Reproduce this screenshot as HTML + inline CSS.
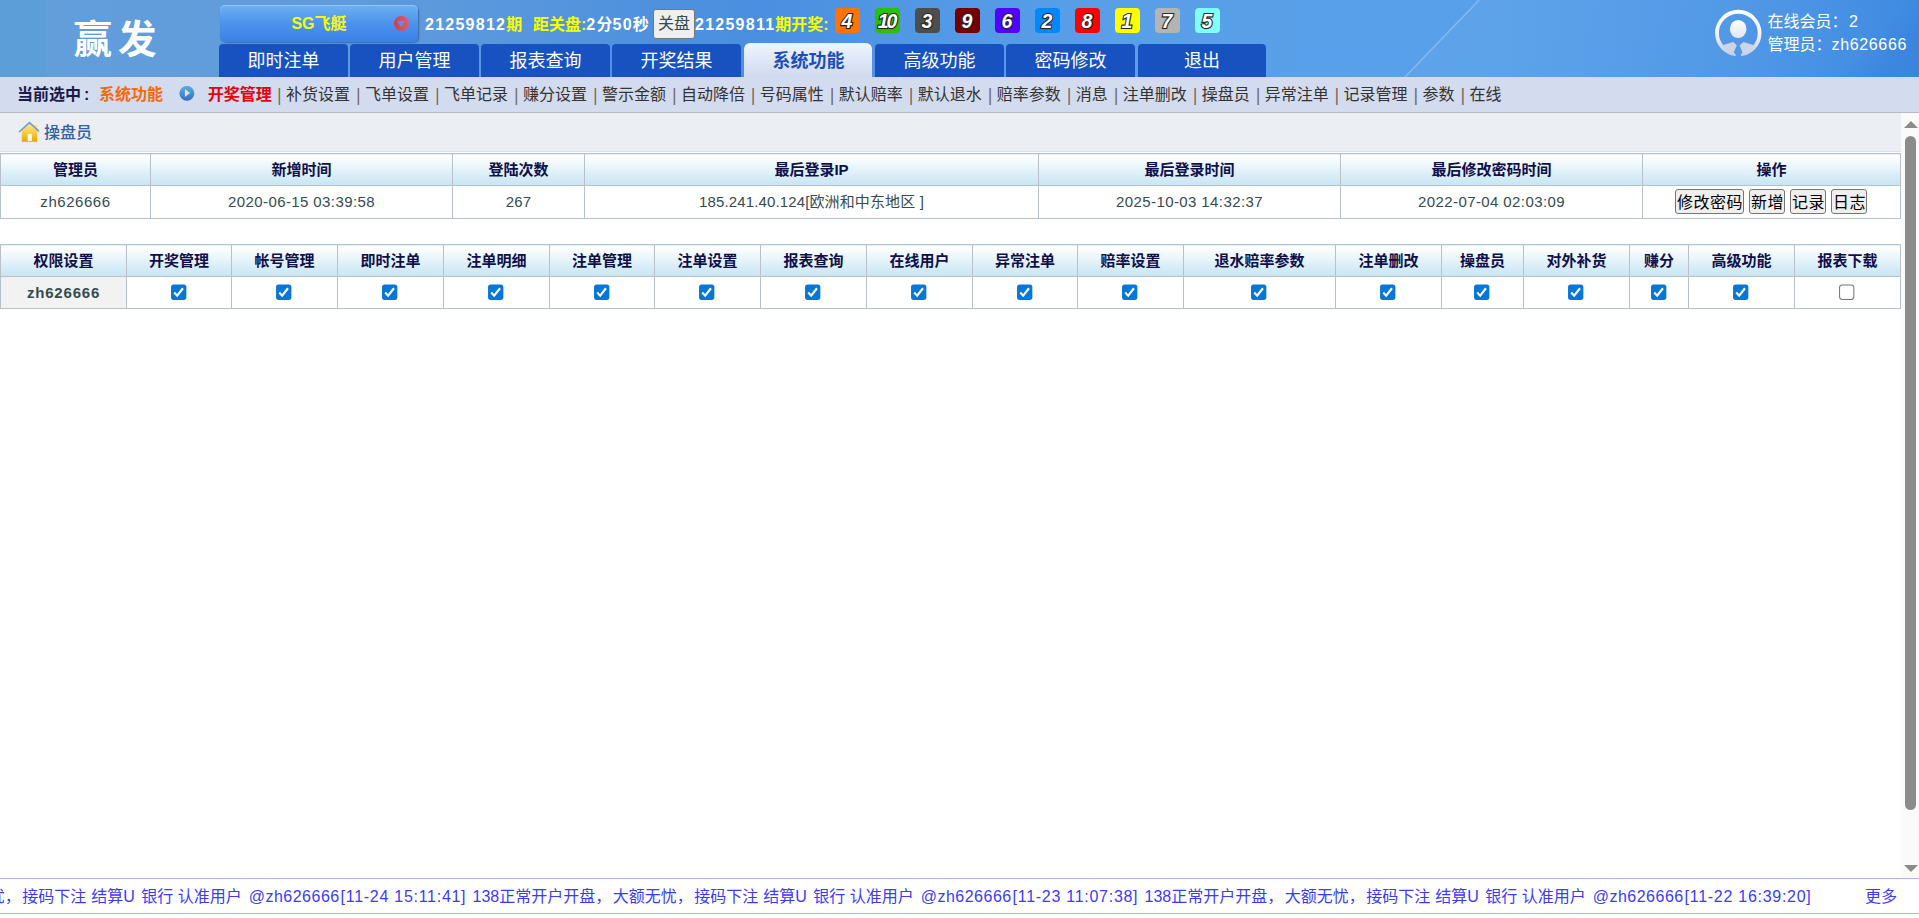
<!DOCTYPE html>
<html lang="zh-CN">
<head>
<meta charset="utf-8">
<title>赢发</title>
<style>
*{box-sizing:border-box;}
html,body{margin:0;padding:0;}
body{width:1919px;height:918px;overflow:hidden;position:relative;background:#fff;
  font-family:"Liberation Sans","Noto Sans CJK SC",sans-serif;font-size:15px;color:#344b50;}
.abs{position:absolute;white-space:nowrap;}
/* ---------- header ---------- */
#header{position:absolute;left:0;top:0;width:1919px;height:77px;overflow:hidden;
  background:
   linear-gradient(90deg,#5c9ed8 0,#5c9ed8 45px,#639edb 46px,#609cdc 300px,#5a98dd 480px,#4f91dd 650px,#4a8fe0 760px,#5197e4 900px,#589fe8 1100px,#58a0e9 1500px,#4e96e6 1750px,#3f8be2 1919px);}
#streak1{position:absolute;left:1404px;top:0;width:600px;height:77px;transform:skewX(-43.9deg);transform-origin:0 100%;
  background:linear-gradient(90deg,rgba(255,255,255,.30) 0,rgba(255,255,255,.22) 1.5px,rgba(255,255,255,.035) 3px,rgba(255,255,255,.02) 250px,rgba(255,255,255,0) 420px);}
#streak2{position:absolute;left:1832px;top:0;width:300px;height:77px;transform:skewX(-43.9deg);transform-origin:0 100%;
  background:linear-gradient(90deg,rgba(20,80,190,.0) 0,rgba(20,80,190,.10) 40px,rgba(20,80,190,.15) 200px);}
#logo{left:73.5px;top:11px;font-size:38.5px;font-weight:bold;color:#fff;letter-spacing:6px;line-height:58px;}
#game{left:220px;top:5px;width:198px;height:37px;border-radius:5px;
  background:linear-gradient(180deg,#6db1f3 0,#4d93ec 50%,#3a80e6 100%);box-shadow:1px 1px 1.5px rgba(30,60,130,.55),inset 0 1px 0 rgba(255,255,255,.28);}
#game .t{left:0;width:198px;text-align:center;top:0;line-height:38px;font-size:16px;font-weight:bold;color:#f6ff00;}
#game .c{left:174.3px;top:10.5px;width:15px;height:15.3px;border-radius:50%;background:linear-gradient(90deg,#c6424b 0,#d1525f 50%,#d75e6f 100%);}
#game .c:after{content:"";position:absolute;left:3.2px;top:5.8px;border:4.4px solid transparent;border-top:6px solid #4c96ee;border-bottom:0;}
.info{top:13px;line-height:24px;font-size:16px;font-weight:bold;color:#fff;}
.y{color:#f6ff00;}
.n{letter-spacing:1.25px;}
#closebtn{left:653px;top:9px;width:42px;height:30px;border:1px solid #767676;border-radius:3px;background:#efefef;color:#344b50;
  font-size:16px;line-height:28.5px;text-align:center;}
.ball{top:8px;width:25px;height:25px;border-radius:4px;color:#fff;font:italic bold 19.5px/26px "Liberation Sans",sans-serif;text-align:center;text-indent:-1px;
  -webkit-text-stroke:2.2px #2a2a2a;paint-order:stroke fill;text-shadow:.5px 1px 1px rgba(30,30,30,.55);}
.tab{top:44px;width:129px;height:33px;background:#1852c0;border-radius:4px 4px 0 0;color:#fff;font-size:18px;line-height:34.5px;text-align:center;}
.tab.on{top:43px;height:34px;width:128px;border-radius:6px 6px 0 0;background:linear-gradient(180deg,#f0f4fd 0,#e1e8f8 45%,#d0d9ef 100%);color:#1c4fb8;font-weight:bold;line-height:37.6px;text-indent:1px;}
#user{left:1767.5px;top:10.3px;font-size:16px;line-height:23px;color:#fff;}
/* ---------- subnav ---------- */
#subnav{position:absolute;left:0;top:77px;width:1919px;height:36px;background:#d3dbee;border-bottom:1px solid #b7bbc3;}
#subnav .abs{top:0;line-height:36px;font-size:16px;color:#333;}
#subitems{word-spacing:.96px;}
#subitems i{font-style:normal;color:#6b6560;display:inline-block;transform:translate(.8px,-.3px) scaleY(1.18);}
/* ---------- content ---------- */
#content{position:absolute;left:0;top:113px;width:1901px;height:765px;background:#fff;overflow:hidden;}
#titlebar{position:absolute;left:0;top:0;width:1901px;height:39px;background:#ebeef2;border-bottom:1px solid #d5e1f5;}
#titlebar .tt{left:44px;top:9px;line-height:22px;font-size:16px;color:#2f62a6;font-weight:500;}
table{position:absolute;left:0;border-collapse:collapse;table-layout:fixed;width:1901px;}
td,th{border:1px solid #b8c0c9;padding:0;text-align:center;font-size:15px;overflow:hidden;white-space:nowrap;}
th{padding-bottom:2px;background:linear-gradient(180deg,#ffffff 0,#f8fcfe 15%,#eaf5fb 40%,#d6ecf7 72%,#c7e5f4 100%);color:#0f0f4b;font-weight:bold;}
td{color:#344b50;padding-bottom:1px;}
td.name{background:#f2f2f2;font-weight:bold;letter-spacing:.8px;}
td.d{letter-spacing:.4px;}
.btn{display:inline-block;height:25px;border:1px solid #767676;border-radius:3px;background:#efefef;color:#000;font-size:16px;line-height:25.5px;padding:0 0 0 1px;margin:0 2.5px;vertical-align:middle;letter-spacing:.5px;position:relative;left:-.5px;top:-.5px;}
.cb{display:inline-block;width:15px;height:15px;border-radius:2.5px;background:#0577d8;vertical-align:middle;position:relative;top:-1px;left:-1px;transform:translate(.2px,-.3px) scale(1.02,1.03);}
.cb svg{display:block;}
.cb.off{background:#fff;border:1px solid #767676;border-radius:3px;}
/* ---------- scrollbar ---------- */
#sb{position:absolute;left:1901px;top:113px;width:18px;height:765px;background:#fafafa;}
#sb .thumb{position:absolute;left:4px;top:23px;width:11px;height:674px;border-radius:6px;background:#8b8b8b;}
#sb .up{position:absolute;left:3px;top:8px;border:7px solid transparent;border-bottom:7px solid #8b8b8b;border-top:0;}
#sb .dn{position:absolute;left:3px;top:752px;border:7px solid transparent;border-top:7px solid #8b8b8b;border-bottom:0;}
/* ---------- footer ---------- */
#footer{position:absolute;left:0;top:878px;width:1919px;height:36px;border-top:1px solid #a9bce8;border-bottom:1px solid #a9bce8;background:#fff;overflow:hidden;}
#footer .abs{top:0;line-height:36px;font-size:16px;color:#3b3bff;}
#mq .m{display:inline-block;width:672px;}
</style>
</head>
<body>
<div id="header">
  <div id="streak1"></div><div id="streak2"></div>
  <div id="logo" class="abs">赢发</div>
  <div id="game" class="abs"><div class="t abs">SG飞艇</div><div class="c abs"></div></div>
  <div class="info abs" style="left:425px"><span class="n">21259812</span><span class="y">期</span></div>
  <div class="info abs" style="left:533px"><span class="y">距关盘:</span><span class="n">2</span>分<span class="n">50</span>秒</div>
  <div id="closebtn" class="abs">关盘</div>
  <div class="info abs" style="left:695px"><span class="n">21259811</span><span class="y">期开奖:</span></div>
  <div class="ball abs" style="left:835px;background:#ff7300">4</div>
  <div class="ball abs" style="left:875px;background:#28c200;letter-spacing:-2px;text-indent:-2px">10</div>
  <div class="ball abs" style="left:915px;background:#4d4d4d">3</div>
  <div class="ball abs" style="left:955px;background:#760000">9</div>
  <div class="ball abs" style="left:995px;background:#5200ff">6</div>
  <div class="ball abs" style="left:1035px;background:#0089ff">2</div>
  <div class="ball abs" style="left:1075px;background:#ff0000">8</div>
  <div class="ball abs" style="left:1115px;background:#ffff00">1</div>
  <div class="ball abs" style="left:1155px;background:#b4b4b4">7</div>
  <div class="ball abs" style="left:1195px;background:#81ffff">5</div>
  <div class="tab abs" style="left:219px">即时注单</div>
  <div class="tab abs" style="left:350px">用户管理</div>
  <div class="tab abs" style="left:481px">报表查询</div>
  <div class="tab abs" style="left:612px">开奖结果</div>
  <div class="tab on abs" style="left:744px">系统功能</div>
  <div class="tab abs" style="left:875px">高级功能</div>
  <div class="tab abs" style="left:1006px">密码修改</div>
  <div class="tab abs" style="left:1138px;width:128px">退出</div>
  <svg class="abs" style="left:1714px;top:9px" width="49" height="49" viewBox="0 0 49 49">
    <defs><linearGradient id="ag" x1="0" y1="0" x2="0" y2="1"><stop offset="0" stop-color="#ffffff"/><stop offset=".5" stop-color="#f2f4fa"/><stop offset="1" stop-color="#c6cfe4"/></linearGradient>
    <linearGradient id="ah" x1="0" y1="0" x2="0" y2="1"><stop offset="0" stop-color="#ffffff"/><stop offset="1" stop-color="#dfe4f0"/></linearGradient>
    <clipPath id="ac"><circle cx="24.3" cy="24.05" r="21"/></clipPath>
    <mask id="am"><rect width="49" height="49" fill="#fff"/><path d="M22.9 36.2 L25.5 36.2 L28.5 43.6 L26.9 45.6 L26.9 49 L21.7 49 L21.7 45.6 L19.8 43.3 Z" fill="#000"/></mask></defs>
    <g mask="url(#am)"><circle cx="24.3" cy="24.05" r="21.3" fill="none" stroke="url(#ag)" stroke-width="3.8"/>
    <g clip-path="url(#ac)" fill="#ccd4e7"><path d="M4 37.6 L19.3 32.9 L24.2 37.8 L29.4 32.9 L45 37.8 L45 48 L4 48 Z"/></g></g>
    <ellipse cx="24.2" cy="20" rx="8.3" ry="9.1" fill="url(#ah)"/>
  </svg>
  <div id="user" class="abs">在线会员：<span style="margin-left:1.5px">2</span><br>管理员：<span style="letter-spacing:.65px">zh626666</span></div>
</div>
<div id="subnav">
  <div class="abs" style="left:17px;font-weight:bold;color:#1a1a4a">当前选中<span style="margin-left:3px">:</span></div>
  <div class="abs" style="left:99px;font-weight:bold;color:#f5690a">系统功能</div>
  <svg class="abs" style="left:179px;top:8.5px" width="16" height="16" viewBox="0 0 16 16"><defs><linearGradient id="pg" x1="0" y1="0" x2="0" y2="1"><stop offset="0" stop-color="#5ab3de"/><stop offset=".5" stop-color="#4a8fd0"/><stop offset="1" stop-color="#346dc3"/></linearGradient></defs><circle cx="7.9" cy="7.3" r="7.5" fill="url(#pg)"/><path d="M5.9 2.9 L11 7 L5.9 11.1 Z" fill="#dbe4f3"/></svg>
  <div class="abs" style="left:207.8px;font-weight:bold;color:#e60012">开奖管理</div>
  <div class="abs" id="subitems" style="left:276.5px"><i>|</i> 补货设置 <i>|</i> 飞单设置 <i>|</i> 飞单记录 <i>|</i> 赚分设置 <i>|</i> 警示金额 <i>|</i> 自动降倍 <i>|</i> 号码属性 <i>|</i> 默认赔率 <i>|</i> 默认退水 <i>|</i> 赔率参数 <i>|</i> 消息 <i>|</i> 注单删改 <i>|</i> 操盘员 <i>|</i> 异常注单 <i>|</i> 记录管理 <i>|</i> 参数 <i>|</i> 在线</div>
</div>
<div id="content">
  <div id="titlebar">
    <svg class="abs" style="left:18px;top:8px" width="22" height="22" viewBox="0 0 22 22">
      <defs><linearGradient id="hg" x1="0" y1="0" x2="0" y2="1"><stop offset="0" stop-color="#ffe98a"/><stop offset=".45" stop-color="#fbcf48"/><stop offset="1" stop-color="#e6a500"/></linearGradient></defs>
      <rect x="16.4" y="3.6" width="2.9" height="6" fill="#fbe28a"/>
      <path d="M3.8 9.2 L11.5 2.3 L19.3 9.2 L19.3 20.2 Q19.3 20.8 18.7 20.8 L4.4 20.8 Q3.8 20.8 3.8 20.2 Z" fill="url(#hg)"/>
      <path d="M1 11 L11.5 1.6 L21 10.4" fill="none" stroke="#6f9bd0" stroke-width="1.6" stroke-linejoin="miter"/>
      <rect x="9.7" y="12.9" width="4.2" height="7" fill="#fffbea"/>
    </svg>
    <div class="tt abs">操盘员</div>
  </div>
  <table id="t1" style="top:40px">
    <colgroup><col style="width:150px"><col style="width:302px"><col style="width:132px"><col style="width:454px"><col style="width:302px"><col style="width:302px"><col style="width:258px"></colgroup>
    <tr style="height:32px"><th>管理员</th><th>新增时间</th><th>登陆次数</th><th>最后登录IP</th><th>最后登录时间</th><th>最后修改密码时间</th><th>操作</th></tr>
    <tr style="height:33px"><td style="letter-spacing:.55px">zh626666</td><td class="d">2020-06-15 03:39:58</td><td style="letter-spacing:.2px">267</td><td><span style="position:relative;top:-1.3px;letter-spacing:.13px">185.241.40.124[欧洲和中东地区 ]</span></td><td class="d">2025-10-03 14:32:37</td><td class="d">2022-07-04 02:03:09</td>
      <td><span class="btn">修改密码</span><span class="btn">新增</span><span class="btn">记录</span><span class="btn">日志</span></td></tr>
  </table>
  <table id="t2" style="top:131px">
    <colgroup><col style="width:126px"><col style="width:105px"><col style="width:106px"><col style="width:106px"><col style="width:106px"><col style="width:105px"><col style="width:106px"><col style="width:106px"><col style="width:106px"><col style="width:105px"><col style="width:106px"><col style="width:152px"><col style="width:106px"><col style="width:82px"><col style="width:106px"><col style="width:59px"><col style="width:106px"><col style="width:106px"></colgroup>
    <tr style="height:32px"><th>权限设置</th><th>开奖管理</th><th>帐号管理</th><th>即时注单</th><th>注单明细</th><th>注单管理</th><th>注单设置</th><th>报表查询</th><th>在线用户</th><th>异常注单</th><th>赔率设置</th><th>退水赔率参数</th><th>注单删改</th><th>操盘员</th><th>对外补货</th><th>赚分</th><th>高级功能</th><th>报表下载</th></tr>
    <tr style="height:32px"><td class="name">zh626666</td>
      <td><span class="cb"><svg width="15" height="15" viewBox="0 0 15 15"><path d="M3.1 7.8 L6 10.9 L11.7 3.7" fill="none" stroke="#fff" stroke-width="2.1"/></svg></span></td>
      <td><span class="cb"><svg width="15" height="15" viewBox="0 0 15 15"><path d="M3.1 7.8 L6 10.9 L11.7 3.7" fill="none" stroke="#fff" stroke-width="2.1"/></svg></span></td>
      <td><span class="cb"><svg width="15" height="15" viewBox="0 0 15 15"><path d="M3.1 7.8 L6 10.9 L11.7 3.7" fill="none" stroke="#fff" stroke-width="2.1"/></svg></span></td>
      <td><span class="cb"><svg width="15" height="15" viewBox="0 0 15 15"><path d="M3.1 7.8 L6 10.9 L11.7 3.7" fill="none" stroke="#fff" stroke-width="2.1"/></svg></span></td>
      <td><span class="cb"><svg width="15" height="15" viewBox="0 0 15 15"><path d="M3.1 7.8 L6 10.9 L11.7 3.7" fill="none" stroke="#fff" stroke-width="2.1"/></svg></span></td>
      <td><span class="cb"><svg width="15" height="15" viewBox="0 0 15 15"><path d="M3.1 7.8 L6 10.9 L11.7 3.7" fill="none" stroke="#fff" stroke-width="2.1"/></svg></span></td>
      <td><span class="cb"><svg width="15" height="15" viewBox="0 0 15 15"><path d="M3.1 7.8 L6 10.9 L11.7 3.7" fill="none" stroke="#fff" stroke-width="2.1"/></svg></span></td>
      <td><span class="cb"><svg width="15" height="15" viewBox="0 0 15 15"><path d="M3.1 7.8 L6 10.9 L11.7 3.7" fill="none" stroke="#fff" stroke-width="2.1"/></svg></span></td>
      <td><span class="cb"><svg width="15" height="15" viewBox="0 0 15 15"><path d="M3.1 7.8 L6 10.9 L11.7 3.7" fill="none" stroke="#fff" stroke-width="2.1"/></svg></span></td>
      <td><span class="cb"><svg width="15" height="15" viewBox="0 0 15 15"><path d="M3.1 7.8 L6 10.9 L11.7 3.7" fill="none" stroke="#fff" stroke-width="2.1"/></svg></span></td>
      <td><span class="cb"><svg width="15" height="15" viewBox="0 0 15 15"><path d="M3.1 7.8 L6 10.9 L11.7 3.7" fill="none" stroke="#fff" stroke-width="2.1"/></svg></span></td>
      <td><span class="cb"><svg width="15" height="15" viewBox="0 0 15 15"><path d="M3.1 7.8 L6 10.9 L11.7 3.7" fill="none" stroke="#fff" stroke-width="2.1"/></svg></span></td>
      <td><span class="cb"><svg width="15" height="15" viewBox="0 0 15 15"><path d="M3.1 7.8 L6 10.9 L11.7 3.7" fill="none" stroke="#fff" stroke-width="2.1"/></svg></span></td>
      <td><span class="cb"><svg width="15" height="15" viewBox="0 0 15 15"><path d="M3.1 7.8 L6 10.9 L11.7 3.7" fill="none" stroke="#fff" stroke-width="2.1"/></svg></span></td>
      <td><span class="cb"><svg width="15" height="15" viewBox="0 0 15 15"><path d="M3.1 7.8 L6 10.9 L11.7 3.7" fill="none" stroke="#fff" stroke-width="2.1"/></svg></span></td>
      <td><span class="cb"><svg width="15" height="15" viewBox="0 0 15 15"><path d="M3.1 7.8 L6 10.9 L11.7 3.7" fill="none" stroke="#fff" stroke-width="2.1"/></svg></span></td>
      <td><span class="cb off"></span></td>
    </tr>
  </table>
</div>
<div id="sb"><div class="up"></div><div class="thumb"></div><div class="dn"></div></div>
<div id="footer">
  <div class="abs" id="mq" style="left:-199.5px"><span class="m">138正常开户开盘，<span style="margin-left:1.5px">大额无忧，</span><span style="margin-left:1.5px">接码下注</span> <span style="margin-left:.55px">结算U</span> <span style="margin-left:2px">银行</span> 认准用户 <span style="margin-left:2.5px;letter-spacing:.5px">@zh626666</span><span style="margin-left:.9px;letter-spacing:.72px">[11-24 15:11:41]</span></span><span class="m">138正常开户开盘，<span style="margin-left:1.5px">大额无忧，</span><span style="margin-left:1.5px">接码下注</span> <span style="margin-left:.55px">结算U</span> <span style="margin-left:2px">银行</span> 认准用户 <span style="margin-left:2.5px;letter-spacing:.5px">@zh626666</span><span style="margin-left:.9px;letter-spacing:.72px">[11-23 11:07:38]</span></span><span class="m">138正常开户开盘，<span style="margin-left:1.5px">大额无忧，</span><span style="margin-left:1.5px">接码下注</span> <span style="margin-left:.55px">结算U</span> <span style="margin-left:2px">银行</span> 认准用户 <span style="margin-left:2.5px;letter-spacing:.5px">@zh626666</span><span style="margin-left:.9px;letter-spacing:.72px">[11-22 16:39:20]</span></span></div>
  <div class="abs" style="left:1865px">更多</div>
</div>
</body>
</html>
